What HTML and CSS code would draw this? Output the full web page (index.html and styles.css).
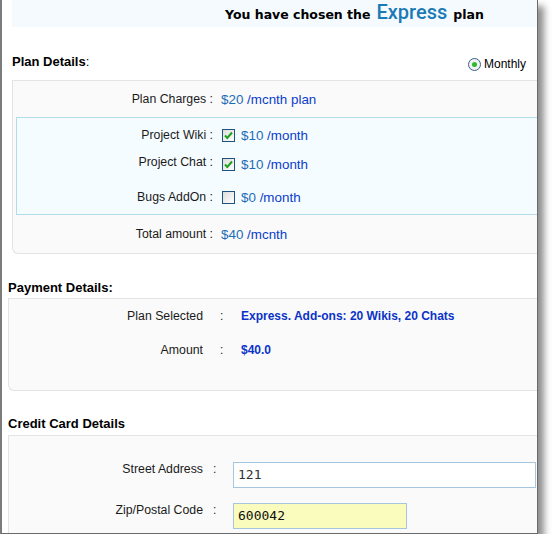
FILE: index.html
```html
<!DOCTYPE html>
<html>
<head>
<meta charset="utf-8">
<link rel="stylesheet" href="styles.css">
</head>
<body>
<div class="window">
  <div class="banner">
    <span class="banner-text">You have chosen the</span>
    <span class="banner-plan">Express</span>
    <span class="banner-text">plan</span>
  </div>

  <div class="section-head plan-head">
    <span class="head-title"><b>Plan Details</b>:</span>
    <span class="radio-wrap"><span class="radio"><span class="radio-dot"></span></span>Monthly</span>
  </div>

  <div class="box plan-box">
    <div class="prow">
      <span class="plabel">Plan Charges :</span>
      <span class="pval"><span class="amt">$20</span> <span class="unit">/mcnth plan</span></span>
    </div>
    <div class="addons">
      <div class="prow arow r1">
        <span class="plabel">Project Wiki :</span>
        <span class="check on"><svg viewBox="0 0 13 13" width="13" height="13"><path d="M3 6.5 L5.3 9 L10 3.5" fill="none" stroke="#22a022" stroke-width="2"/></svg></span>
        <span class="pval"><span class="amt">$10</span> <span class="unit">/month</span></span>
      </div>
      <div class="prow arow r2">
        <span class="plabel">Project Chat :</span>
        <span class="check on"><svg viewBox="0 0 13 13" width="13" height="13"><path d="M3 6.5 L5.3 9 L10 3.5" fill="none" stroke="#22a022" stroke-width="2"/></svg></span>
        <span class="pval"><span class="amt">$10</span> <span class="unit">/month</span></span>
      </div>
      <div class="prow arow r3">
        <span class="plabel">Bugs AddOn :</span>
        <span class="check"></span>
        <span class="pval"><span class="amt">$0</span> <span class="unit">/month</span></span>
      </div>
    </div>
    <div class="prow total">
      <span class="plabel">Total amount :</span>
      <span class="pval"><span class="amt">$40</span> <span class="unit">/mcnth</span></span>
    </div>
  </div>

  <div class="section-head pay-head"><span class="head-title"><b>Payment Details:</b></span></div>
  <div class="box pay-box">
    <div class="drow">
      <span class="dlabel">Plan Selected</span>
      <span class="colon">:</span>
      <span class="dval">Express. Add-ons: 20 Wikis, 20 Chats</span>
    </div>
    <div class="drow second">
      <span class="dlabel">Amount</span>
      <span class="colon">:</span>
      <span class="dval">$40.0</span>
    </div>
  </div>

  <div class="section-head cc-head"><span class="head-title"><b>Credit Card Details</b></span></div>
  <div class="box cc-box">
    <div class="frow">
      <span class="dlabel">Street Address</span>
      <span class="fcolon">:</span>
      <span class="input wide">121</span>
    </div>
    <div class="frow second">
      <span class="dlabel">Zip/Postal Code</span>
      <span class="fcolon">:</span>
      <span class="input zip">600042</span>
    </div>
  </div>
</div>
</body>
</html>
```

FILE: styles.css
```css
html, body {
  margin: 0;
  padding: 0;
  background: #ffffff;
}
body {
  font-family: "Liberation Sans", Arial, sans-serif;
  font-size: 12px;
  color: #1a1a1a;
}
.window {
  width: 538px;
  height: 534px;
  box-sizing: border-box;
  border-left: 2px solid #7c7c7c;
  border-right: 1px solid #6a6a6a;
  border-bottom: 1px solid #6a6a6a;
  background: #ffffff;
  overflow: hidden;
  box-shadow: 6px 6px 7px rgba(0, 0, 0, 0.45);
}
.banner {
  margin-left: 10px;
  height: 27px;
  box-sizing: border-box;
  background: #f4fafd;
  display: flex;
  align-items: baseline;
  padding-left: 213px;
  padding-top: 0;
  gap: 6px;
}
.banner-text {
  font-family: "DejaVu Sans", Verdana, sans-serif;
  font-weight: bold;
  font-size: 12.5px;
  line-height: 16px;
  color: #000;
}
.banner-plan {
  font-family: Roboto, "Open Sans", sans-serif;
  font-size: 20px;
  font-weight: 500;
  color: #1b7ab5;
  line-height: normal;
}
.section-head {
  display: flex;
  align-items: center;
  justify-content: space-between;
  height: 16px;
  line-height: 16px;
}
.head-title {
  font-size: 13px;
  color: #000;
}
.plan-head {
  margin: 27px 11px 10px 10px;
}
.radio-wrap {
  display: flex;
  align-items: center;
  gap: 3px;
  padding-top: 4px;
  font-size: 12px;
  color: #000;
}
.radio {
  width: 11px;
  height: 11px;
  border: 1px solid #3f5f86;
  border-radius: 50%;
  background: #f0f2f4;
  display: flex;
  align-items: center;
  justify-content: center;
}
.radio-dot {
  width: 5px;
  height: 5px;
  border-radius: 50%;
  background: #2db82d;
}
.box {
  background: #fafafa;
  border: 1px solid #e3e3e3;
  border-right: none;
  border-radius: 0 0 0 6px;
}
.plan-box {
  margin-left: 10px;
  padding: 10px 0 11px 0;
}
.prow {
  display: flex;
  align-items: center;
  height: 16px;
}
.plabel {
  width: 200px;
  text-align: right;
  white-space: nowrap;
  font-size: 12.3px;
}
.pval {
  margin-left: 8px;
  font-size: 13.4px;
  white-space: nowrap;
}
.amt { color: #1d6db6; }
.unit { color: #0b3dcb; }
.addons {
  margin: 10px 0 0 3px;
  border: 1px solid #b3dbe9;
  border-right: none;
  background: #f5fcff;
  padding: 9px 0 9px 0;
}
.arow .plabel { width: 196px; }
.arow .pval { margin-left: 6px; }
.r2 { margin-top: 13px; }
.r3 { margin-top: 17px; }
.r2 .plabel { position: relative; top: -2px; }
.check {
  margin-left: 9px;
  width: 11px;
  height: 11px;
  border: 1px solid #1d5282;
  background: linear-gradient(135deg, #dcdcd8, #ffffff);
  display: block;
  position: relative;
}
.check svg {
  position: absolute;
  left: -1px;
  top: -1px;
}
.total { margin-top: 11px; }
.pay-head {
  margin: 26px 0 2px 6px;
}
.pay-box {
  margin-left: 6px;
  padding: 9px 0 32px 0;
}
.drow {
  display: flex;
  align-items: center;
  height: 16px;
}
.drow.second { margin-top: 18px; }
.dlabel {
  width: 194px;
  text-align: right;
  white-space: nowrap;
  font-size: 12.3px;
}
.colon {
  margin-left: 17px;
  width: 21px;
}
.dval {
  color: #0a34c8;
  font-weight: bold;
  white-space: nowrap;
}
.cc-head {
  margin: 25px 0 3px 6px;
}
.cc-box {
  margin-left: 6px;
  padding-top: 26px;
  height: 120px;
}
.frow {
  display: flex;
  align-items: center;
  height: 26px;
}
.frow .dlabel { position: relative; top: -6px; }
.frow.second { margin-top: 15px; }
.fcolon {
  margin-left: 10px;
  width: 20px;
  position: relative;
  top: -6px;
}
.input {
  height: 26px;
  box-sizing: border-box;
  border: 1px solid #a6c6e0;
  background: #ffffff;
  font-family: "DejaVu Sans Mono", monospace;
  font-size: 13px;
  color: #333;
  padding-left: 4px;
  line-height: 24px;
}
.input.wide { width: 303px; }
.input.zip {
  width: 174px;
  background: #fafcbe;
  color: #111;
}
```
